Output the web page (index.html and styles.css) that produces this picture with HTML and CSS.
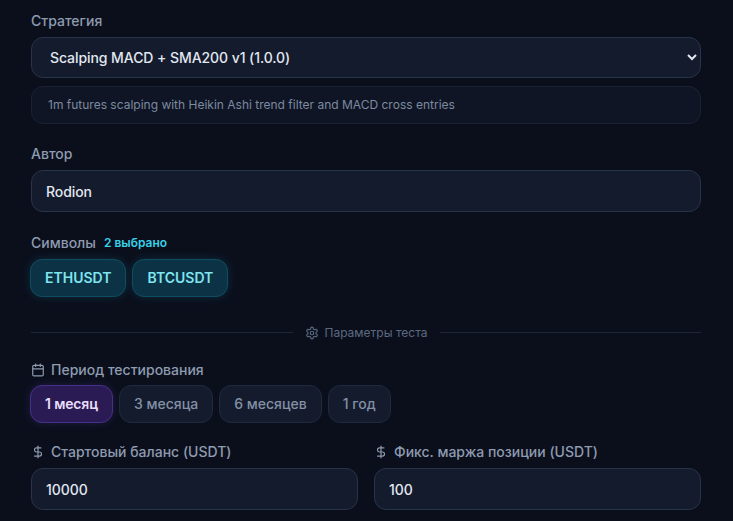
FILE: index.html
```html
<!DOCTYPE html>
<html lang="en">
<head>
    <meta charset="UTF-8">
    <meta name="viewport" content="width=device-width, initial-scale=1.0">
    <title>Backtest</title>
    <link rel="stylesheet" href="styles.css">
</head>
<body>
    <div class="container">
        <div class="field">
            <label class="label" for="strategy">Стратегия</label>
            <select id="strategy" class="control control-select">
                <option>Scalping MACD + SMA200 v1 (1.0.0)</option>
            </select>
            <div class="desc">1m futures scalping with Heikin Ashi trend filter and MACD cross entries</div>
        </div>
        <div class="field">
            <label class="label" for="author">Автор</label>
            <input type="text" id="author" class="control" value="Rodion">
        </div>
        <div class="field">
            <div class="label label-row">Символы <span class="count">2 выбрано</span></div>
            <div class="chips">
                <button class="chip chip-symbol">ETHUSDT</button>
                <button class="chip chip-symbol">BTCUSDT</button>
            </div>
        </div>
        <div class="divider">
            <span class="divider-text">
                <svg class="icon" width="14" height="14" viewBox="0 0 24 24">
                    <path d="M12.22 2h-.44a2 2 0 0 0-2 2v.18a2 2 0 0 1-1 1.73l-.43.25a2 2 0 0 1-2 0l-.15-.08a2 2 0 0 0-2.73.73l-.22.38a2 2 0 0 0 .73 2.73l.15.1a2 2 0 0 1 1 1.72v.51a2 2 0 0 1-1 1.74l-.15.09a2 2 0 0 0-.73 2.73l.22.38a2 2 0 0 0 2.73.73l.15-.08a2 2 0 0 1 2 0l.43.25a2 2 0 0 1 1 1.73V20a2 2 0 0 0 2 2h.44a2 2 0 0 0 2-2v-.18a2 2 0 0 1 1-1.73l.43-.25a2 2 0 0 1 2 0l.15.08a2 2 0 0 0 2.73-.73l.22-.39a2 2 0 0 0-.73-2.73l-.15-.08a2 2 0 0 1-1-1.74v-.5a2 2 0 0 1 1-1.74l.15-.09a2 2 0 0 0 .73-2.73l-.22-.38a2 2 0 0 0-2.73-.73l-.15.08a2 2 0 0 1-2 0l-.43-.25a2 2 0 0 1-1-1.73V4a2 2 0 0 0-2-2z"/>
                    <circle cx="12" cy="12" r="3"/>
                </svg>
                Параметры теста
            </span>
        </div>
        <div class="field field-period">
            <div class="label label-icon">
                <svg class="icon" width="14" height="14" viewBox="0 0 24 24">
                    <path d="M8 2v4"/><path d="M16 2v4"/>
                    <rect x="3" y="4" width="18" height="18" rx="2"/>
                    <path d="M3 10h18"/>
                </svg>
                Период тестирования
            </div>
            <div class="chips">
                <button class="chip chip-active">1 месяц</button>
                <button class="chip">3 месяца</button>
                <button class="chip">6 месяцев</button>
                <button class="chip">1 год</button>
            </div>
        </div>
        <div class="columns">
            <div>
                <label class="label label-icon" for="balance">
                    <svg class="icon" width="14" height="14" viewBox="0 0 24 24">
                        <path d="M12 2v20"/>
                        <path d="M17 5H9.5a3.5 3.5 0 0 0 0 7h5a3.5 3.5 0 0 1 0 7H6"/>
                    </svg>
                    Стартовый баланс (USDT)
                </label>
                <input type="text" id="balance" class="control" value="10000">
            </div>
            <div>
                <label class="label label-icon" for="margin">
                    <svg class="icon" width="14" height="14" viewBox="0 0 24 24">
                        <path d="M12 2v20"/>
                        <path d="M17 5H9.5a3.5 3.5 0 0 0 0 7h5a3.5 3.5 0 0 1 0 7H6"/>
                    </svg>
                    Фикс. маржа позиции (USDT)
                </label>
                <input type="text" id="margin" class="control" value="100">
            </div>
        </div>
    </div>
</body>
</html>
```

FILE: styles.css
```css
* {
    box-sizing: border-box;
}
html, body {
    height: 100%;
    overflow: hidden;
}
body {
    margin: 0;
    background-color: #0b0f1c;
    font-family: Inter, "Noto Sans", sans-serif;
    color: #e2e8f0;
}
.container {
    padding: 12px 32px 0 31px;
}
.field {
    margin-bottom: 21px;
}
.label {
    display: block;
    margin-bottom: 8px;
    font-size: 14px;
    line-height: 17px;
    font-weight: 500;
    color: #8e9bb0;
}
.label-row {
    display: flex;
    align-items: center;
    gap: 8px;
    padding-top: 1px;
}
.label-icon {
    display: flex;
    align-items: center;
    gap: 6px;
}
.count {
    font-size: 12px;
    font-weight: 600;
    color: #38d0e8;
}
.control {
    display: block;
    width: 100%;
    height: 42px;
    padding: 0 14px;
    font-family: inherit;
    font-size: 14px;
    font-weight: 500;
    letter-spacing: -0.005em;
    color: #e2e8f0;
    background-color: #141b2d;
    border: 1px solid #283449;
    border-radius: 12px;
    outline: none;
}
.control-select {
    height: 41px;
}
.desc {
    margin-top: 8px;
    padding: 0 16px;
    height: 38px;
    line-height: 36px;
    font-size: 12px;
    color: #7d8aa0;
    background-color: #0f1524;
    border: 1px solid #1a2233;
    border-radius: 12px;
}
.chips {
    display: flex;
    gap: 6px;
    margin-left: -1px;
}
.chip {
    height: 38px;
    padding: 0 14px 2px;
    font-family: inherit;
    font-size: 14px;
    font-weight: 500;
    color: #8390a6;
    background-color: #141b2d;
    border: 1px solid #1f2a3c;
    border-radius: 12px;
}
.chip-symbol {
    font-weight: 600;
    color: #7fe5f0;
    background-color: #0c3345;
    border-color: #0e4d5f;
    box-shadow: 0 0 10px rgba(34, 211, 238, 0.15);
}
.chip-active {
    font-weight: 600;
    letter-spacing: -0.01em;
    color: #e9defc;
    background-color: #2b1b55;
    border-color: #47308a;
    box-shadow: 0 0 10px rgba(139, 92, 246, 0.15);
}
.divider {
    display: flex;
    align-items: center;
    gap: 12px;
    margin: 28px 0 21px;
    font-size: 12px;
    color: #5b6980;
}
.divider::before, .divider::after {
    content: "";
    flex: 1;
    height: 1px;
    background-color: #1e2738;
}
.divider-text {
    display: flex;
    align-items: center;
    gap: 6px;
    line-height: 15px;
}
.icon {
    flex: none;
    fill: none;
    stroke: currentColor;
    stroke-width: 2;
    stroke-linecap: round;
    stroke-linejoin: round;
}
.field-period {
    margin-bottom: 20px;
}
.field-period .label {
    margin-bottom: 7px;
}
.columns {
    display: grid;
    grid-template-columns: 1fr 1fr;
    gap: 16px;
}
.columns .label {
    margin-bottom: 8px;
}
```
